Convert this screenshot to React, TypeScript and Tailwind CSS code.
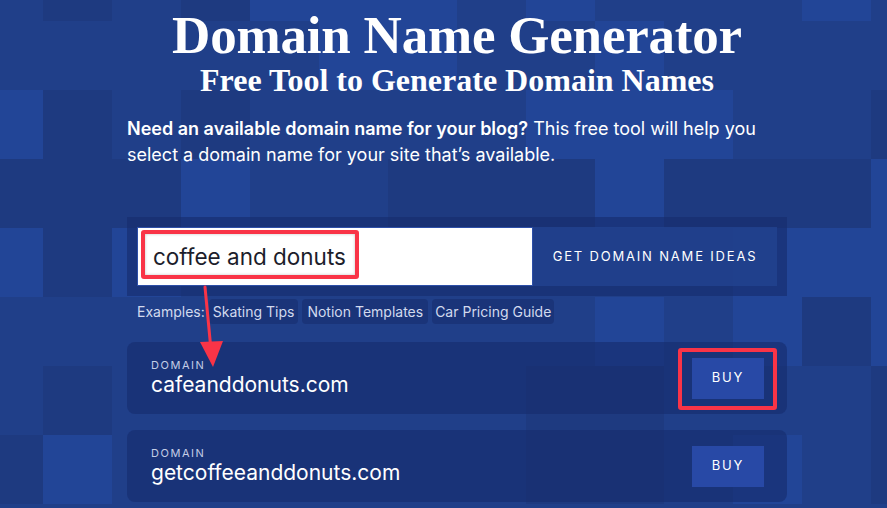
import React from "react";

const A = "#1e3a80";
const B = "#203f89";
const C = "#224597";
const map: string[] = [
  "babacccbcbbbcb",
  "bbbbbccbbcbbbb",
  "cababbbbcccbba",
  "aaacbbaaacaaac",
  "cacbbbbbbbbccc",
  "bbbbbbbbbcbcac",
  "babbbbbbaabbba",
  "acbbbbbbaabcba",
  "bbbbbbbbbbbbbb",
];
const colorOf: Record<string, string> = { a: A, b: B, c: C };

function Tiles() {
  const cells: React.ReactNode[] = [];
  map.forEach((row, r) =>
    row.split("").forEach((ch, c) => {
      cells.push(<div key={`${r}-${c}`} style={{ backgroundColor: colorOf[ch] }} />);
    })
  );
  return (
    <div className="absolute inset-0 overflow-hidden">
      <div className="absolute left-[-26px] top-[-48px] grid grid-cols-[repeat(14,69px)] grid-rows-[repeat(9,69px)]">
        {cells}
      </div>
    </div>
  );
}

function Card({ name, highlight }: { name: string; highlight?: boolean }) {
  return (
    <div className="flex h-[72px] items-center justify-between rounded-lg bg-[rgba(22,44,108,0.6)] pl-6 pr-[23px]">
      <div className="flex flex-col">
        <span className="text-[11px] leading-[14px] tracking-[0.14em] text-[#c3cde6]">DOMAIN</span>
        <span className="text-[21px] leading-[26px] text-white">{name}</span>
      </div>
      <div className="relative">
        <button className="flex h-[41px] w-[72px] items-center justify-center bg-[#2849a6] text-[13px] tracking-[0.14em] text-white">
          BUY
        </button>
        {highlight && (
          <div className="absolute left-[-14px] top-[-10px] h-[62px] w-[99px] rounded-[3px] border-[4px] border-[#f93447]" />
        )}
      </div>
    </div>
  );
}

export default function App() {
  return (
    <div
      className="relative h-[508px] w-[887px] overflow-hidden bg-[#203f89]"
      style={{ fontFamily: "Inter, 'Noto Sans', sans-serif" }}
    >
      <Tiles />
      <div className="relative ml-[127px] flex w-[660px] flex-col">
        <h1
          className="mt-[10px] whitespace-nowrap text-center text-[53px] font-bold leading-[50px] tracking-[-0.2px] text-white"
          style={{ fontFamily: "'Liberation Serif', serif" }}
        >
          Domain Name Generator
        </h1>
        <h2
          className="mt-[3px] text-center text-[32px] font-bold leading-[34px] text-white"
          style={{ fontFamily: "'Liberation Serif', serif" }}
        >
          Free Tool to Generate Domain Names
        </h2>
        <p className="mt-[19px] text-[18px] leading-[26px] text-white">
          <span className="font-semibold">Need an available domain name for your blog?</span>{" "}
          This free tool will help you select a domain name for your site that’s available.
        </p>

        <div className="mt-[49px] flex h-[79px] bg-[rgba(22,44,108,0.6)] p-[10px]">
          <div className="relative flex w-[396px] items-center border border-[#2d4fa8] bg-white pl-[15px]">
            <span className="text-[22.5px] text-[#1c1d2b]">coffee and donuts</span>
            <div className="absolute left-[3px] top-[2px] h-[49px] w-[218px] rounded-[3px] border-[4px] border-[#f93447] shadow-[inset_0_0_3px_rgba(0,0,0,0.25)]" />
          </div>
          <button className="flex flex-1 items-center justify-center bg-[rgba(34,66,142,0.85)] text-[13px] tracking-[0.14em] text-white">
            GET DOMAIN NAME IDEAS
          </button>
        </div>

        <div className="ml-[10px] mt-[3px] flex items-center gap-[4px] text-[14px] text-[#d2daee]">
          <span>Examples:</span>
          <span className="rounded-[4px] bg-[rgba(22,44,108,0.55)] px-[4px] py-[2px]">Skating Tips</span>
          <span className="rounded-[4px] bg-[rgba(22,44,108,0.55)] px-[5px] py-[2px]">Notion Templates</span>
          <span className="rounded-[4px] bg-[rgba(22,44,108,0.55)] px-[3px] py-[2px]">Car Pricing Guide</span>
        </div>

        <div className="mt-[18px] flex flex-col gap-[16px]">
          <Card name="cafeanddonuts.com" highlight />
          <Card name="getcoffeeanddonuts.com" />
        </div>
      </div>

      <svg className="pointer-events-none absolute left-0 top-0" width="887" height="508">
        <line x1="205" y1="287" x2="211" y2="350" stroke="#f93447" strokeWidth="3" strokeLinecap="round" />
        <polygon points="200,342 223,341 213,367" fill="#f93447" />
      </svg>
    </div>
  );
}
